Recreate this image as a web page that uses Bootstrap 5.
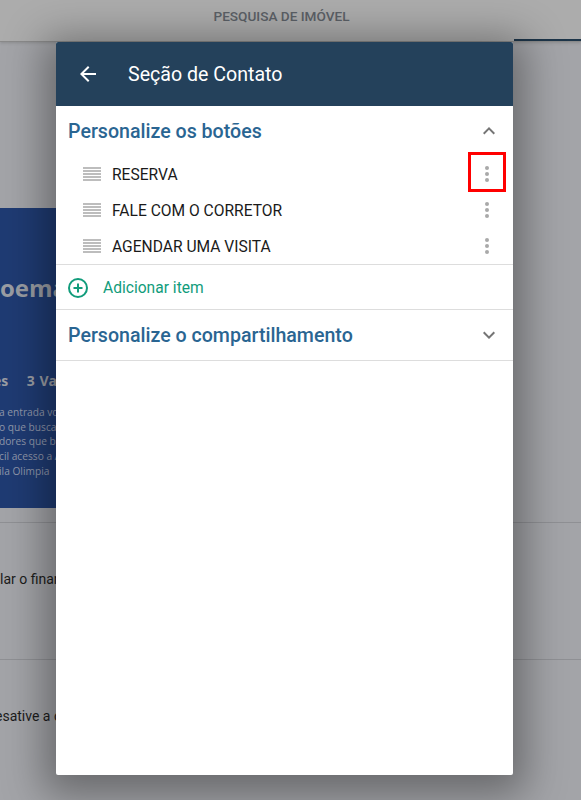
<!DOCTYPE html>
<html lang="pt-BR">
<head>
    <meta charset="UTF-8">
    <meta name="viewport" content="width=device-width, initial-scale=1.0">
    <title>Seção de Contato</title>
    <link href="https://cdn.jsdelivr.net/npm/bootstrap@5.3.0/dist/css/bootstrap.min.css" rel="stylesheet">
    <style>
        html, body { height: 100%; }
        body { font-family: Roboto, "Liberation Sans", sans-serif; background: #a3a4a8; color: #111; overflow: hidden; }
        .topo { height: 42px; background: #acacac; border-bottom: 1px solid #8a8a8a; box-shadow: 0 1px 3px rgba(0,0,0,.15); position: relative; padding-right: 18px; }
        .topo-titulo { font-size: 13.6px; font-weight: 500; color: #5b6066; line-height: 32px; width: 100%; text-align: center; }
        .topo-aba { position: absolute; right: 0; bottom: 0; width: 67px; height: 2px; background: #1d3549; }
        .fundo { width: 56px; overflow: hidden; white-space: nowrap; }
        .vazio-1 { height: 166px; }
        .banner { height: 300px; background: #1f3b73; padding-top: 66px; font-family: "Open Sans", sans-serif; }
        .banner-nome { font-size: 24px; font-weight: 700; line-height: 28px; color: #9a9da3; margin-right: -3px; }
        .banner-dados { font-size: 14px; font-weight: 700; margin: 69px 0 0 -7px; line-height: 20px; color: #9a9da3; word-spacing: 1px; }
        .banner-txt { font-size: 10.2px; line-height: 14.7px; margin: 14px 0 0 -1px; color: #8f97aa; }
        .fundo-txt { font-size: 14px; color: #1c1c1c; height: 137px; border-top: 1px solid #8f9094; padding-top: 46px; }
        .fundo-recuo { text-indent: -5px; }
        .gap-banner { height: 14px; }
        .janela { position: absolute; left: 56px; top: 42px; width: 457px; height: 733px; background: #fff; border-radius: 2px; box-shadow: 0 8px 40px 12px rgba(0,0,0,.36); }
        .janela-topo { height: 64px; background: #24415b; color: #fff; font-size: 19.6px; padding-left: 20px; border-radius: 2px 2px 0 0; }
        .janela-topo svg { margin-right: 28px; }
        .janela-topo span, .secao-titulo, .adicionar span { margin-top: 2px; }
        .secao { height: 50px; padding: 0 12px 0 12px; }
        .secao-titulo { font-size: 19.6px; font-weight: 500; color: #2a6592; }
        .item-linha { height: 36px; padding: 0 14px 0 27px; font-size: 15.6px; color: #1a1a1a; }
        .item-nome { margin: 4px 0 0 11px; }
        .adicionar { height: 46px; padding: 1px 0 0 12px; color: #119c7b; font-size: 15.6px; border-top: 1px solid #ddd; border-bottom: 1px solid #ddd; }
        .adicionar svg { margin-right: 15px; }
        .fim { height: 51px; border-bottom: 1px solid #ddd; }
        .destaque { position: absolute; left: 412px; top: 110px; width: 38px; height: 40px; border: 3px solid #f00; }
    </style>
</head>
<body>
    <div class="topo d-flex">
        <div class="topo-titulo">PESQUISA DE IMÓVEL</div>
        <div class="topo-aba"></div>
    </div>

    <div class="vazio-1"></div>
    <div class="fundo banner">
        <div class="banner-nome text-end">oema</div>
        <div class="banner-dados">es&nbsp;&nbsp;&nbsp;&nbsp;3 Vagas</div>
        <div class="banner-txt">a entrada vo<br>o que busca<br>dores que b<br>cil acesso a A<br>ila Olimpia</div>
    </div>
    <div class="gap-banner"></div>
    <div class="fundo-txt">lar o financiamento</div>
    <div class="fundo-txt fundo-recuo">esative a opção</div>

    <div class="janela">
        <div class="janela-topo d-flex align-items-center">
            <svg width="24" height="24" viewBox="0 0 24 24" fill="#fff"><path d="M20 11H7.83l5.59-5.59L12 4l-8 8 8 8 1.41-1.41L7.83 13H20z"/></svg>
            <span>Seção de Contato</span>
        </div>
        <div class="secao d-flex align-items-center justify-content-between">
            <span class="secao-titulo">Personalize os botões</span>
            <svg width="24" height="24" viewBox="0 0 24 24" fill="#757575"><path d="M12 8l-6 6 1.41 1.41L12 10.83l4.59 4.58L18 14z"/></svg>
        </div>
        <div class="item-linha d-flex align-items-center">
            <svg width="18" height="15" viewBox="0 0 18 15" fill="#bdbdbd"><path d="M0 0h18v2H0zM0 3h18v2H0zM0 6h18v2H0zM0 9h18v2H0zM0 12h18v2H0z"/></svg>
            <span class="item-nome flex-grow-1">RESERVA</span>
            <svg width="24" height="24" viewBox="0 0 24 24" fill="#a9a9a9"><circle cx="12" cy="6" r="2"/><circle cx="12" cy="12" r="2"/><circle cx="12" cy="18" r="2"/></svg>
        </div>
        <div class="item-linha d-flex align-items-center">
            <svg width="18" height="15" viewBox="0 0 18 15" fill="#bdbdbd"><path d="M0 0h18v2H0zM0 3h18v2H0zM0 6h18v2H0zM0 9h18v2H0zM0 12h18v2H0z"/></svg>
            <span class="item-nome flex-grow-1">FALE COM O CORRETOR</span>
            <svg width="24" height="24" viewBox="0 0 24 24" fill="#a9a9a9"><circle cx="12" cy="6" r="2"/><circle cx="12" cy="12" r="2"/><circle cx="12" cy="18" r="2"/></svg>
        </div>
        <div class="item-linha d-flex align-items-center">
            <svg width="18" height="15" viewBox="0 0 18 15" fill="#bdbdbd"><path d="M0 0h18v2H0zM0 3h18v2H0zM0 6h18v2H0zM0 9h18v2H0zM0 12h18v2H0z"/></svg>
            <span class="item-nome flex-grow-1">AGENDAR UMA VISITA</span>
            <svg width="24" height="24" viewBox="0 0 24 24" fill="#a9a9a9"><circle cx="12" cy="6" r="2"/><circle cx="12" cy="12" r="2"/><circle cx="12" cy="18" r="2"/></svg>
        </div>
        <div class="adicionar d-flex align-items-center">
            <svg width="20" height="20" viewBox="0 0 20 20" fill="none" stroke="#119c7b" stroke-width="2"><circle cx="10" cy="10" r="9"/><path d="M10 5.5v9M5.5 10h9"/></svg>
            <span>Adicionar item</span>
        </div>
        <div class="secao fim d-flex align-items-center justify-content-between">
            <span class="secao-titulo">Personalize o compartilhamento</span>
            <svg width="24" height="24" viewBox="0 0 24 24" fill="#757575"><path d="M16.59 8.59L12 13.17 7.41 8.59 6 10l6 6 6-6z"/></svg>
        </div>
        <div class="destaque"></div>
    </div>

    <script src="https://cdn.jsdelivr.net/npm/bootstrap@5.3.0/dist/js/bootstrap.bundle.min.js"></script>
</body>
</html>
